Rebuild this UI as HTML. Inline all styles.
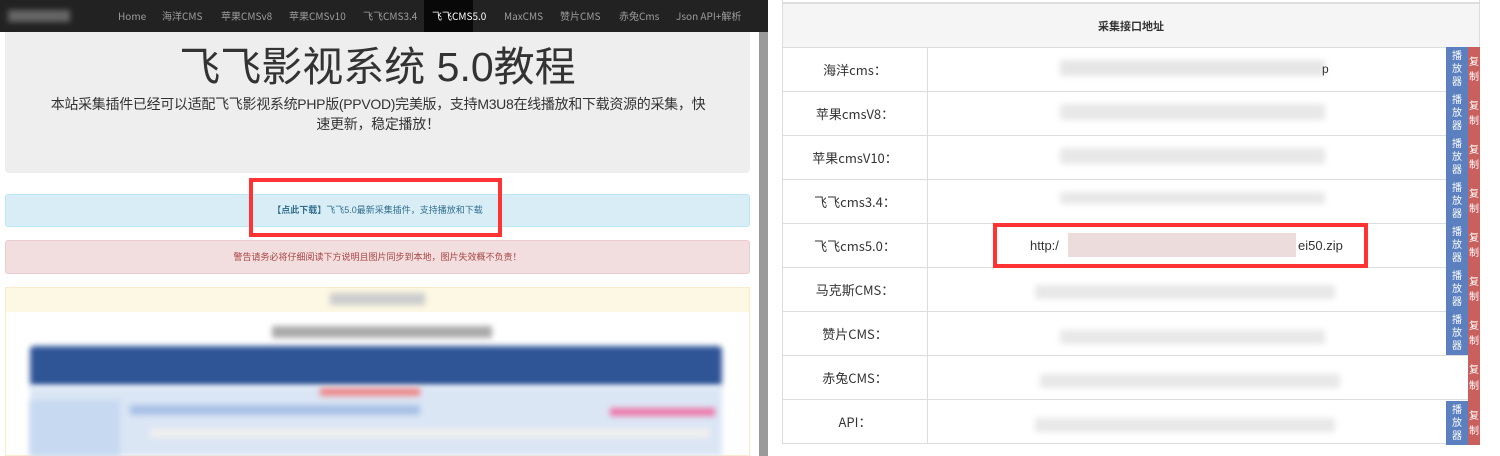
<!DOCTYPE html>
<html><head><meta charset="utf-8"><style>
*{margin:0;padding:0;box-sizing:border-box}
body{width:1500px;height:456px;overflow:hidden;background:#fff;font-family:"Liberation Sans","Noto Sans CJK SC",sans-serif;position:relative}
.a{position:absolute}
.nav{left:0;top:0;width:768px;height:32px;background:#222}
.nav span{position:absolute;top:0;height:32px;line-height:32px;font-size:10px;color:#9d9d9d;font-family:"Noto Sans CJK SC",sans-serif}
.blur{filter:blur(3px)}
.t td{border:1px solid #ddd;text-align:center;font-size:13px;color:#333;height:44px;font-family:"Noto Sans CJK SC",sans-serif}
</style></head><body>
<div class="a nav">
<div class="a blur" style="left:8px;top:10px;width:62px;height:12px;background:#666"></div>
<div class="a" style="left:424px;top:0;width:49px;height:32px;background:#080808"></div>
<span style="left:118px">Home</span><span style="left:162px">海洋CMS</span><span style="left:221px">苹果CMSv8</span><span style="left:289px">苹果CMSv10</span>
<span style="left:363px">飞飞CMS3.4</span><span style="left:432px;color:#fff">飞飞CMS5.0</span><span style="left:504px">MaxCMS</span><span style="left:560px">赞片CMS</span><span style="left:619px">赤兔Cms</span><span style="left:676px">Json API+解析</span>
</div>
<div class="a" style="left:759px;top:32px;width:9px;height:424px;background:#9a9a9a"></div>
<div class="a" style="left:5px;top:32px;width:745px;height:141px;background:#eee;border-radius:0 0 4px 4px"></div>
<div class="a" style="left:0;top:41px;width:755px;text-align:center;font-size:41px;color:#333;line-height:52px">飞飞影视系统 5.0教程</div>
<div class="a" style="left:47px;top:94px;width:662px;text-align:center;font-size:14px;color:#333;line-height:20px;letter-spacing:-0.3px">本站采集插件已经可以适配飞飞影视系统PHP版(PPVOD)完美版，支持M3U8在线播放和下载资源的采集，快速更新，稳定播放！</div>
<div class="a" style="left:5px;top:194px;width:745px;height:33px;background:#d9edf7;border:1px solid #bce8f1;border-radius:3px;font-size:9px;color:#31708f;text-align:center;line-height:31px"><b>【点此下载】</b>飞飞5.0最新采集插件，支持播放和下载</div>
<div class="a" style="left:249px;top:178px;width:253px;height:59px;border:4px solid #f33"></div>
<div class="a" style="left:5px;top:240px;width:745px;height:34px;background:#f2dede;border:1px solid #ebccd1;border-radius:3px;font-size:9px;color:#a94442;text-align:center;line-height:32px">警告请务必将仔细阅读下方说明且图片同步到本地，图片失效概不负责！</div>
<div class="a" style="left:5px;top:287px;width:745px;height:169px;border:1px solid #faebcc;background:#fff"></div>
<div class="a" style="left:6px;top:288px;width:743px;height:24px;background:#fcf8e3"></div>
<div class="a blur" style="left:330px;top:293px;width:95px;height:12px;background:#ccc"></div>
<div class="a blur" style="left:272px;top:326px;width:220px;height:12px;background:#aaa"></div>
<div class="a blur" style="left:30px;top:346px;width:692px;height:40px;background:#2f5597;border-radius:4px"></div>
<div class="a blur" style="left:30px;top:386px;width:692px;height:70px;background:#dbe6f5"></div>
<div class="a blur" style="left:30px;top:400px;width:90px;height:56px;background:#c7d9f1"></div>
<div class="a blur" style="left:130px;top:405px;width:290px;height:10px;background:#a9c1e6"></div>
<div class="a blur" style="left:320px;top:388px;width:100px;height:8px;background:#e88"></div>
<div class="a blur" style="left:610px;top:408px;width:105px;height:8px;background:#e7a"></div>
<div class="a blur" style="left:150px;top:428px;width:560px;height:10px;background:#eee"></div>
<!-- right -->
<div class="a" style="left:782px;top:0;width:698px;height:3px;border:1px solid #ddd;border-top:none"></div>
<table class="a t" style="left:782px;top:3px;width:698px;border-collapse:collapse">
<tr><td colspan="2" style="background:#f5f5f5;font-size:11px;font-weight:bold;height:44px">采集接口地址</td></tr>
<tr><td style="width:145px">海洋cms：</td><td></td></tr>
<tr><td>苹果cmsV8：</td><td></td></tr>
<tr><td>苹果cmsV10：</td><td></td></tr>
<tr><td>飞飞cms3.4：</td><td></td></tr>
<tr><td>飞飞cms5.0：</td><td></td></tr>
<tr><td>马克斯CMS：</td><td></td></tr>
<tr><td>赞片CMS：</td><td></td></tr>
<tr><td>赤兔CMS：</td><td></td></tr>
<tr><td>API：</td><td></td></tr>
</table>
<div class="a blur" style="left:1060px;top:60px;width:265px;height:16px;background:#e6e6e6"></div>
<div class="a" style="left:1322px;top:62px;font-size:12px;color:#333">p</div>
<div class="a blur" style="left:1060px;top:104px;width:265px;height:16px;background:#e8e8e8"></div>
<div class="a blur" style="left:1060px;top:148px;width:265px;height:16px;background:#e8e8e8"></div>
<div class="a blur" style="left:1060px;top:192px;width:265px;height:12px;background:#e8e8e8"></div>
<div class="a" style="left:1030px;top:238px;font-size:13px;color:#333">http:/</div>
<div class="a" style="left:1068px;top:233px;width:228px;height:24px;background:#ecdcdc"></div>
<div class="a" style="left:1298px;top:238px;font-size:13px;color:#333">ei50.zip</div>
<div class="a" style="left:993px;top:223px;width:375px;height:45px;border:4px solid #f33"></div>
<div class="a blur" style="left:1035px;top:285px;width:300px;height:14px;background:#e8e8e8"></div>
<div class="a blur" style="left:1060px;top:330px;width:265px;height:14px;background:#e8e8e8"></div>
<div class="a blur" style="left:1040px;top:374px;width:300px;height:14px;background:#e8e8e8"></div>
<div class="a blur" style="left:1035px;top:418px;width:300px;height:14px;background:#e8e8e8"></div>
<svg class="a" style="left:1446px;top:47px" width="34" height="398" font-size="10" fill="#fff" font-family="Noto Sans CJK SC">
<g id="r"><rect x="0" y="0" width="22" height="44" fill="#5b7fbf"/><rect x="22" y="0" width="12" height="44" fill="#c9605e"/>
<text x="6" y="12">播</text><text x="6" y="25">放</text><text x="6" y="38">器</text><text x="23" y="18">复</text><text x="23" y="33">制</text></g>
<use href="#r" y="44"/><use href="#r" y="88"/><use href="#r" y="132"/><use href="#r" y="176"/><use href="#r" y="220"/><use href="#r" y="264"/>
<rect x="22" y="308" width="12" height="46" fill="#c9605e"/><text x="23" y="326">复</text><text x="23" y="342">制</text>
<use href="#r" y="354"/>
</svg>
</body></html>
